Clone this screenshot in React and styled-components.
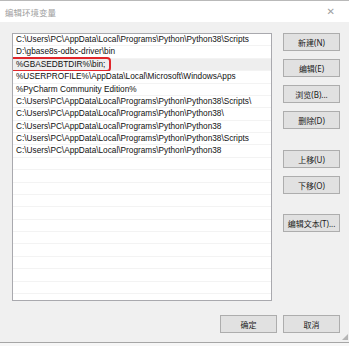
import styled, { createGlobalStyle } from "styled-components";

const GlobalStyle = createGlobalStyle`
    html, body {
        margin: 0;
        padding: 0;
        background: #f7f7f7;
    }
    body {
        font-family: "Noto Sans", "Noto Sans CJK SC", sans-serif;
    }
`;

const Window = styled.div`
    width: 349px;
    height: 343px;
    box-sizing: border-box;
    border-top: 1px solid #b9b9b9;
    border-bottom: 1px solid #a6a6a6;
    background: #f0f0f0;
    display: flex;
    flex-direction: column;
    position: relative;
`;

const TitleBar = styled.div`
    height: 21px;
    background: #ffffff;
    display: flex;
    align-items: center;
    justify-content: space-between;
    padding: 0 14px 0 5px;
`;

const Title = styled.span`
    font-family: "Noto Sans CJK SC", sans-serif;
    font-size: 8.5px;
    color: #a0a0a0;
`;

const Close = styled.span`
    font-size: 10px;
    color: #a0a0a0;
    font-family: "DejaVu Sans", sans-serif;
`;

const Body = styled.div`
    flex: 1;
    display: flex;
    flex-direction: column;
    padding: 11px 9px 9px 12px;
`;

const Main = styled.div`
    display: flex;
    gap: 11px;
`;

const List = styled.div`
    width: 260px;
    height: 268px;
    box-sizing: border-box;
    border: 1px solid #a9a9ae;
    background: #ffffff;
    overflow: hidden;
`;

const Row = styled.div`
    position: relative;
    height: 12.38px;
    box-sizing: border-box;
    border-bottom: 1px solid #f3f3f3;
    background: ${p => (p.selected ? "#eeeeee" : "#ffffff")};
    padding-left: 3px;
    font-family: "Liberation Sans", "Noto Sans CJK SC", sans-serif;
    font-size: 8.25px;
    line-height: 11.4px;
    color: #111;
    white-space: nowrap;
`;

const Highlight = styled.div`
    position: absolute;
    left: -6px;
    top: -2px;
    width: 104px;
    height: 15px;
    box-sizing: border-box;
    border: 2px solid #e0262b;
    border-radius: 4px;
    pointer-events: none;
`;

const Side = styled.div`
    display: flex;
    flex-direction: column;
    gap: 8px;
`;

const Button = styled.div`
    width: 57px;
    height: 18px;
    box-sizing: border-box;
    border: 1px solid #adadad;
    background: #e1e1e1;
    display: flex;
    align-items: center;
    justify-content: center;
    font-family: "Noto Sans", "Noto Sans CJK SC", sans-serif;
    font-size: 8px;
    color: #1a1a1a;
    margin-top: ${p => p.$push || 0}px;
`;

const Footer = styled.div`
    display: flex;
    justify-content: flex-end;
    gap: 6px;
    margin-top: 14px;
`;

const Grip = styled.div`
    position: absolute;
    right: 1px;
    bottom: 2px;
    width: 6px;
    height: 6px;
    background:
        radial-gradient(circle, #b5b5b5 0.8px, transparent 1px) 0 0 / 2px 2px;
    clip-path: polygon(100% 0, 100% 100%, 0 100%);
`;

const paths = [
    "C:\\Users\\PC\\AppData\\Local\\Programs\\Python\\Python38\\Scripts",
    "D:\\gbase8s-odbc-driver\\bin",
    "%GBASEDBTDIR%\\bin;",
    "%USERPROFILE%\\AppData\\Local\\Microsoft\\WindowsApps",
    "%PyCharm Community Edition%",
    "C:\\Users\\PC\\AppData\\Local\\Programs\\Python\\Python38\\Scripts\\",
    "C:\\Users\\PC\\AppData\\Local\\Programs\\Python\\Python38\\",
    "C:\\Users\\PC\\AppData\\Local\\Programs\\Python\\Python38",
    "C:\\Users\\PC\\AppData\\Local\\Programs\\Python\\Python38\\Scripts",
    "C:\\Users\\PC\\AppData\\Local\\Programs\\Python\\Python38",
];

const rows = [...paths, ...Array(12).fill("")];

const App = () => {
    return (
        <>
            <GlobalStyle />
            <Window>
                <TitleBar>
                    <Title>编辑环境变量</Title>
                    <Close>✕</Close>
                </TitleBar>
                <Body>
                    <Main>
                        <List>
                            {rows.map((text, i) => (
                                <Row key={i} selected={i === 2}>
                                    {text}
                                    {i === 2 && <Highlight />}
                                </Row>
                            ))}
                        </List>
                        <Side>
                            <Button>新建(N)</Button>
                            <Button>编辑(E)</Button>
                            <Button>浏览(B)...</Button>
                            <Button>删除(D)</Button>
                            <Button $push={13}>上移(U)</Button>
                            <Button>下移(O)</Button>
                            <Button $push={12}>编辑文本(T)...</Button>
                        </Side>
                    </Main>
                    <Footer>
                        <Button>确定</Button>
                        <Button>取消</Button>
                    </Footer>
                </Body>
                <Grip />
            </Window>
        </>
    );
};

export default App;
